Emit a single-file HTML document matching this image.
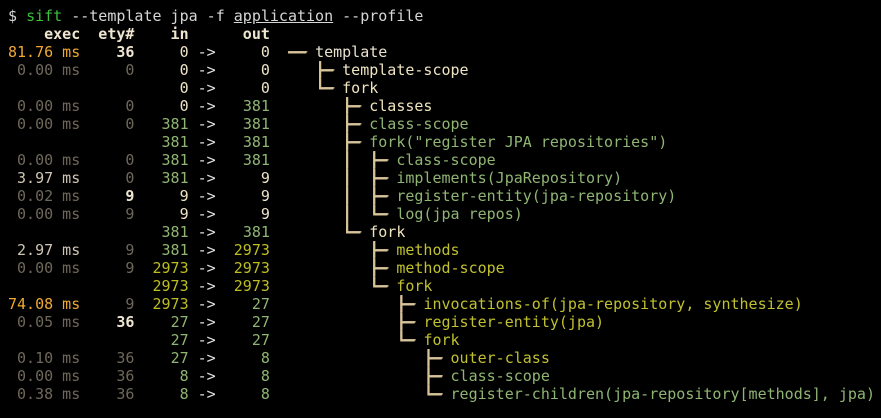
<!DOCTYPE html>
<html><head><meta charset="utf-8"><style>
html,body{margin:0;padding:0;background:#000;width:881px;height:418px;overflow:hidden}
pre{margin:0;padding:7px 0 0 8px;font-family:"DejaVu Sans Mono","Liberation Mono",monospace;font-size:15px;line-height:18px;color:#d6d6d6;}
.g{color:#3cbf3c}.b{font-weight:bold;color:#eee6d0}
.o{color:#f0a830}.d{color:#6f685a}.l{color:#cfc6b4}
.c{color:#efe4c8}.n{color:#8fb573}.y{color:#bdbd22}
.t{color:#d8c49a;font-weight:bold;text-shadow:1px 0 0 #d8c49a,0 1px 0 #d8c49a}.a{color:#e0e0e0}
.tn{color:#8fb573}.ty{color:#c0c030}.tw{color:#e8e2d0}.tc{color:#efe4c0}
</style></head><body><pre>$ <span class="g">sift</span> --template jpa -f <u>application</u> --profile
<span class="b">    exec  ety#    in      out</span>
<span class="o">81.76 ms</span>    <span class="b">36</span>     <span class="c">0</span> <span class="a">-&gt;</span>     <span class="c">0</span>  <span class="t">──</span> <span class="tw">template</span>
<span class="d"> 0.00 ms     0</span>     <span class="c">0</span> <span class="a">-&gt;</span>     <span class="c">0</span>     <span class="t">├─</span> <span class="tc">template-scope</span>
                   <span class="c">0</span> <span class="a">-&gt;</span>     <span class="c">0</span>     <span class="t">└─</span> <span class="tc">fork</span>
<span class="d"> 0.00 ms     0</span>     <span class="c">0</span> <span class="a">-&gt;</span>   <span class="n">381</span>        <span class="t">├─</span> <span class="tc">classes</span>
<span class="d"> 0.00 ms     0</span>   <span class="n">381</span> <span class="a">-&gt;</span>   <span class="n">381</span>        <span class="t">├─</span> <span class="tn">class-scope</span>
                 <span class="n">381</span> <span class="a">-&gt;</span>   <span class="n">381</span>        <span class="t">├─</span> <span class="tn">fork("register JPA repositories")</span>
<span class="d"> 0.00 ms     0</span>   <span class="n">381</span> <span class="a">-&gt;</span>   <span class="n">381</span>        <span class="t">│  ├─</span> <span class="tn">class-scope</span>
<span class="l"> 3.97 ms</span>     <span class="d">0</span>   <span class="n">381</span> <span class="a">-&gt;</span>     <span class="c">9</span>        <span class="t">│  ├─</span> <span class="tn">implements(JpaRepository)</span>
<span class="d"> 0.02 ms</span>     <span class="b">9</span>     <span class="c">9</span> <span class="a">-&gt;</span>     <span class="c">9</span>        <span class="t">│  ├─</span> <span class="tn">register-entity(jpa-repository)</span>
<span class="d"> 0.00 ms     9</span>     <span class="c">9</span> <span class="a">-&gt;</span>     <span class="c">9</span>        <span class="t">│  └─</span> <span class="tn">log(jpa repos)</span>
                 <span class="n">381</span> <span class="a">-&gt;</span>   <span class="n">381</span>        <span class="t">└─</span> <span class="tc">fork</span>
<span class="l"> 2.97 ms</span>     <span class="d">9</span>   <span class="n">381</span> <span class="a">-&gt;</span>  <span class="y">2973</span>           <span class="t">├─</span> <span class="ty">methods</span>
<span class="d"> 0.00 ms     9</span>  <span class="y">2973</span> <span class="a">-&gt;</span>  <span class="y">2973</span>           <span class="t">├─</span> <span class="ty">method-scope</span>
                <span class="y">2973</span> <span class="a">-&gt;</span>  <span class="y">2973</span>           <span class="t">└─</span> <span class="ty">fork</span>
<span class="o">74.08 ms</span>     <span class="d">9</span>  <span class="y">2973</span> <span class="a">-&gt;</span>    <span class="n">27</span>              <span class="t">├─</span> <span class="ty">invocations-of(jpa-repository, synthesize)</span>
<span class="d"> 0.05 ms</span>    <span class="b">36</span>    <span class="n">27</span> <span class="a">-&gt;</span>    <span class="n">27</span>              <span class="t">├─</span> <span class="ty">register-entity(jpa)</span>
                  <span class="n">27</span> <span class="a">-&gt;</span>    <span class="n">27</span>              <span class="t">└─</span> <span class="ty">fork</span>
<span class="d"> 0.10 ms    36</span>    <span class="n">27</span> <span class="a">-&gt;</span>     <span class="n">8</span>                 <span class="t">├─</span> <span class="ty">outer-class</span>
<span class="d"> 0.00 ms    36</span>     <span class="n">8</span> <span class="a">-&gt;</span>     <span class="n">8</span>                 <span class="t">├─</span> <span class="tn">class-scope</span>
<span class="d"> 0.38 ms    36</span>     <span class="n">8</span> <span class="a">-&gt;</span>     <span class="n">8</span>                 <span class="t">└─</span> <span class="tn">register-children(jpa-repository[methods], jpa)</span>
</pre></body></html>
